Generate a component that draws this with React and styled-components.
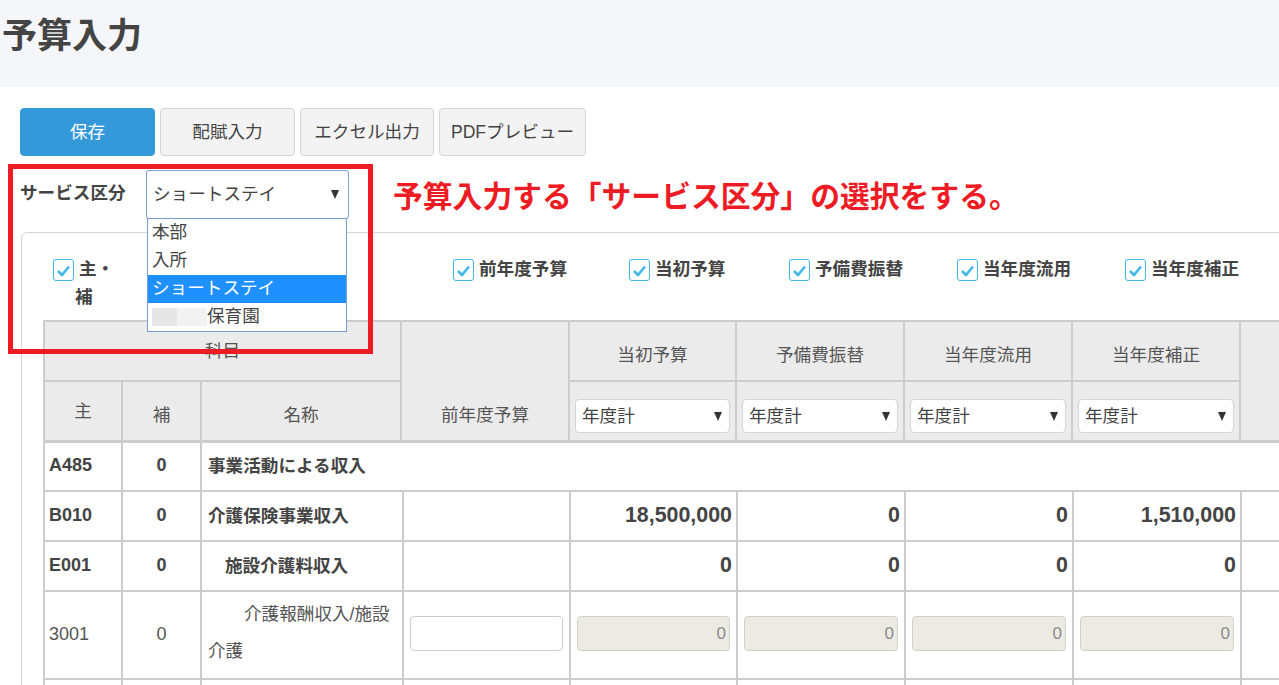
import React from "react";
import styled, { createGlobalStyle } from "styled-components";

const GlobalStyle = createGlobalStyle`
  html, body { margin: 0; padding: 0; height: 100%; overflow: hidden; background: #fff; }
  body {
    font-family: "Liberation Sans", "Noto Sans CJK JP", sans-serif;
    color: #444;
    font-size: 17.6px;
  }
  * { box-sizing: border-box; }
`;

const Page = styled.div`
  position: relative;
  width: 1279px;
  height: 685px;
  overflow: hidden;
`;

const Header = styled.header`
  height: 87px;
  background: #f5f6fa;
  padding: 14px 2px 0;
`;

const Title = styled.h1`
  margin: 0;
  font-size: 35px;
  line-height: 44px;
  font-weight: 700;
  color: #444;
`;

const Content = styled.main`
  padding: 21px 0 0 20px;
`;

const Toolbar = styled.div`
  display: flex;
  gap: 5px;
  height: 48px;
`;

const ToolButton = styled.button`
  width: ${(p) => p.$w}px;
  height: 48px;
  padding: 0 0 4px;
  border-radius: 4px;
  border: 1px solid ${(p) => (p.$primary ? "#3498db" : "#d4d4d4")};
  background: ${(p) => (p.$primary ? "#3498db" : "#f3f3f3")};
  color: ${(p) => (p.$primary ? "#fff" : "#444")};
  font: inherit;
  font-size: 17.6px;
`;

const ServiceRow = styled.div`
  display: flex;
  align-items: flex-start;
  height: 50px;
  margin-top: 14px;
`;

const ServiceLabel = styled.label`
  width: 126px;
  height: 49px;
  line-height: 47px;
  font-size: 17.6px;
  font-weight: 700;
  color: #444;
`;

const SelectWrap = styled.div`
  position: relative;
  width: 203px;
  height: 49px;
  margin-right: 44px;
`;

const SelectBox = styled.div`
  display: flex;
  align-items: center;
  justify-content: space-between;
  height: 49px;
  padding: 0 9px 5px 6px;
  background: #fff;
  border: 1px solid #7aa0e0;
  border-radius: 3px;
  font-size: 17.6px;
  color: #444;
`;

const Caret = styled.span`
  width: 0;
  height: 0;
  margin-top: 4px;
  border-left: 4px solid transparent;
  border-right: 4px solid transparent;
  border-top: 9px solid #333;
`;

const Dropdown = styled.ul`
  position: absolute;
  left: 1px;
  top: 48px;
  width: 200px;
  margin: 0;
  padding: 0;
  list-style: none;
  background: #fff;
  border: 1px solid #7a9ad8;
  z-index: 3;
`;

const Option = styled.li`
  display: flex;
  align-items: center;
  height: 28px;
  padding: 0 0 6px 4px;
  font-size: 17.6px;
  background: ${(p) => (p.$active ? "#1e90ff" : "#fff")};
  color: ${(p) => (p.$active ? "#fff" : "#444")};
`;

const Blur = styled.span`
  width: 55px;
  height: 18px;
  margin-top: 6px;
  background: linear-gradient(90deg, #e6e6e6 0 45%, #f2f2f2 45% 100%);
`;

const Note = styled.div`
  font-size: 29.8px;
  line-height: 53px;
  font-weight: 700;
  color: #ed1c24;
  white-space: nowrap;
`;

const RedFrame = styled.div`
  position: absolute;
  left: 8px;
  top: 164px;
  width: 365px;
  height: 190px;
  border: 5px solid #ed1c24;
  z-index: 4;
  pointer-events: none;
`;

const Panel = styled.section`
  width: 1400px;
  height: 500px;
  margin: 12px 0 0 1px;
  padding: 19px 0 0 22px;
  border: 1px solid #d6d6d6;
  border-radius: 6px;
`;

const FilterRow = styled.div`
  display: flex;
  height: 68px;
  padding-left: 9px;
`;

const Check = styled.label`
  flex: 0 0 ${(p) => p.$w}px;
  display: flex;
  align-items: flex-start;
  gap: 5px;
  padding-top: 3px;
  font-size: 17.6px;
  font-weight: 700;
  line-height: 28px;
  white-space: nowrap;
  color: #444;
`;

const CheckBox = styled.span`
  flex: none;
  display: flex;
  align-items: center;
  justify-content: center;
  width: 21px;
  height: 22px;
  background: #fff;
  border: 1px solid #46b4e8;
  border-radius: 3px;
  margin-top: 4px;
`;

const Wrapped = styled.span`
  display: block;
  white-space: normal;
  width: 42px;
  margin-left: -4px;
  text-indent: 4px;
`;

const Grid = styled.table`
  table-layout: fixed;
  width: ${(p) => p.$w}px;
  border-collapse: collapse;
  margin-left: -1px;
  margin-top: ${(p) => p.$mt || 0}px;
`;

const Th = styled.th`
  background: #ebebeb;
  border: 2px solid #ccc;
  font-weight: 400;
  font-size: 17.6px;
  color: #555;
  padding: ${(p) => p.$pt || 0}px 5px ${(p) => p.$pb || 0}px;
  height: 60px;
  text-align: center;
  vertical-align: middle;
`;

const Td = styled.td`
  border: 2px solid #ccc;
  height: ${(p) => p.$h || 50}px;
  font-size: 17.6px;
  font-weight: ${(p) => (p.$bold ? 700 : 400)};
  color: ${(p) => (p.$bold ? "#444" : "#555")};
  text-align: ${(p) => p.$align || "left"};
  padding: 0 6px 4px;
  white-space: nowrap;
`;

const CodeCell = styled(Td)`
  font-size: 18px;
  padding: 0 4px 2px;
`;

const NameCell = styled(Td)`
  padding-left: ${(p) => (p.$indent || 0) + 6}px;
`;

const WrapName = styled(Td)`
  white-space: normal;
  line-height: 37px;
  text-indent: 36px;
`;

const Amount = styled(Td)`
  text-align: right;
  font-size: 21.4px;
  font-weight: 700;
  color: #444;
  padding: 0 4px 2px 0;
`;

const MiniSelect = styled.div`
  display: flex;
  align-items: center;
  justify-content: space-between;
  height: 34px;
  margin-top: 10px;
  padding: 0 7px 4px 6px;
  background: #fff;
  border: 1px solid #d4d4d4;
  border-radius: 4px;
  color: #444;
  font-size: 17.6px;
`;

const Input = styled.div`
  height: 35px;
  padding: 0 3px 0 5px;
  line-height: 33px;
  text-align: right;
  border: 1px solid ${(p) => (p.$disabled ? "#d0d0c8" : "#ccc")};
  border-radius: 4px;
  background: ${(p) => (p.$disabled ? "#ebebe4" : "#fff")};
  color: #888;
  font-size: 17px;
`;

const tick = (
  <svg width="15" height="13" viewBox="0 0 15 13" aria-hidden="true">
    <path d="M2 7 L6 11 L13 2.5" fill="none" stroke="#46b4e8" strokeWidth="2.6" />
  </svg>
);

const headCols = [78, 79, 200, 168, 167, 168, 168, 168, 200];
const bodyCols = [78, 79, 202, 167, 167, 168, 168, 168, 200];
const periods = ["当初予算", "予備費振替", "当年度流用", "当年度補正"];
const filters = [
  ["前年度予算", 176],
  ["当初予算", 160],
  ["予備費振替", 168],
  ["当年度流用", 168],
  ["当年度補正", 168],
];

function Cols({ list }) {
  return (
    <colgroup>
      {list.map((w, i) => (
        <col key={i} style={{ width: w }} />
      ))}
    </colgroup>
  );
}

function SumRow({ code, name, indent, vals }) {
  return (
    <tr>
      <CodeCell $bold>{code}</CodeCell>
      <CodeCell $bold $align="center">0</CodeCell>
      <NameCell $bold $indent={indent}>{name}</NameCell>
      <Td />
      {vals.map((v, i) => (
        <Amount key={i}>{v}</Amount>
      ))}
      <Td />
    </tr>
  );
}

export default function App() {
  return (
    <Page>
      <GlobalStyle />
      <Header>
        <Title>予算入力</Title>
      </Header>
      <Content>
        <Toolbar>
          <ToolButton $w={135} $primary>保存</ToolButton>
          <ToolButton $w={135}>配賦入力</ToolButton>
          <ToolButton $w={134}>エクセル出力</ToolButton>
          <ToolButton $w={147}>PDFプレビュー</ToolButton>
        </Toolbar>
        <ServiceRow>
          <ServiceLabel>サービス区分</ServiceLabel>
          <SelectWrap>
            <SelectBox>
              ショートステイ
              <Caret />
            </SelectBox>
            <Dropdown>
              <Option>本部</Option>
              <Option>入所</Option>
              <Option $active>ショートステイ</Option>
              <Option>
                <Blur />
                保育園
              </Option>
            </Dropdown>
          </SelectWrap>
          <Note>予算入力する「サービス区分」の選択をする。</Note>
        </ServiceRow>
        <Panel>
          <FilterRow>
            <Check $w={400}>
              <CheckBox>{tick}</CheckBox>
              <Wrapped>主・補</Wrapped>
            </Check>
            {filters.map(([label, w]) => (
              <Check key={label} $w={w}>
                <CheckBox>{tick}</CheckBox>
                {label}
              </Check>
            ))}
          </FilterRow>
          <Grid $w={1396}>
            <Cols list={headCols} />
            <thead>
              <tr>
                <Th colSpan={3} $pb={4}>科目</Th>
                <Th rowSpan={2} $pt={64}>前年度予算</Th>
                {periods.map((p) => (
                  <Th key={p} $pt={4}>{p}</Th>
                ))}
                <Th rowSpan={2} />
              </tr>
              <tr>
                <Th $pb={4}>主</Th>
                <Th $pt={4}>補</Th>
                <Th $pt={4}>名称</Th>
                {periods.map((p) => (
                  <Th key={p}>
                    <MiniSelect>
                      年度計
                      <Caret />
                    </MiniSelect>
                  </Th>
                ))}
              </tr>
            </thead>
          </Grid>
          <Grid $w={1397} $mt={-1}>
            <Cols list={bodyCols} />
            <tbody>
              <tr>
                <CodeCell $h={49} $bold>A485</CodeCell>
                <CodeCell $h={49} $bold $align="center">0</CodeCell>
                <NameCell $h={49} $bold colSpan={7}>事業活動による収入</NameCell>
              </tr>
              <SumRow code="B010" name="介護保険事業収入" vals={["18,500,000", "0", "0", "1,510,000"]} />
              <SumRow code="E001" name="施設介護料収入" indent={17} vals={["0", "0", "0", "0"]} />
              <tr>
                <CodeCell $h={88}>3001</CodeCell>
                <CodeCell $h={88} $align="center">0</CodeCell>
                <WrapName $h={88}>介護報酬収入/施設介護</WrapName>
                <Td $h={88}><Input /></Td>
                {[0, 1, 2, 3].map((i) => (
                  <Td key={i} $h={88}><Input $disabled>0</Input></Td>
                ))}
                <Td $h={88} />
              </tr>
              <tr>
                <Td />
                <Td />
                <Td />
                <Td />
                <Td />
                <Td />
                <Td />
                <Td />
                <Td />
              </tr>
            </tbody>
          </Grid>
        </Panel>
      </Content>
      <RedFrame />
    </Page>
  );
}
